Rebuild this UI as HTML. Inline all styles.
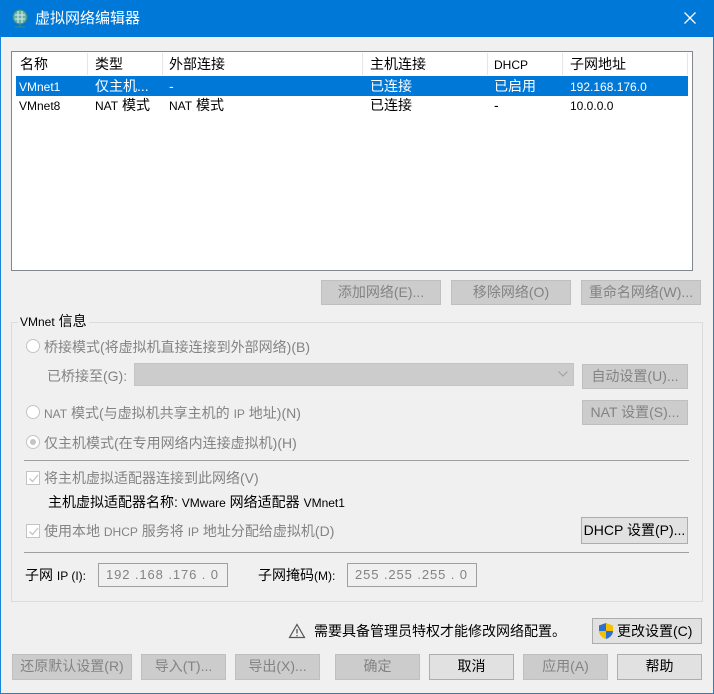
<!DOCTYPE html>
<html><head><meta charset="utf-8"><style>
*{box-sizing:border-box;margin:0;padding:0}
body{width:714px;height:694px;background:#f0f0f0;font-family:"Liberation Sans","Noto Sans CJK SC",sans-serif;font-size:14px;color:#000;position:relative;overflow:hidden}
.a{position:absolute;white-space:nowrap}
.t{line-height:18px}
.btn{position:absolute;background:#e1e1e1;border:1px solid #adadad;text-align:center;line-height:22px;font-size:14px}
.dis{background:#cccccc;border-color:#bfbfbf;color:#838383}
.g{color:#838383}
.sm{font-size:12px}
.radio{position:absolute;width:14px;height:14px;border:1px solid #c4c4c4;border-radius:50%;background:#fff}
.chk{position:absolute;width:14px;height:14px;border:1px solid #c4c4c4;background:#fff}
</style></head><body>
<div class="a" style="left:0;top:0;width:714px;height:694px;border:1px solid #1883d7;border-top:none"></div>
<div class="a" style="left:0;top:0;width:714px;height:37px;background:#0078d7"></div>
<svg class="a" style="left:11px;top:9px" width="18" height="20" viewBox="0 0 18 20"><circle cx="9" cy="8" r="7" fill="#6ab2a6" stroke="#3d8d84"/><path d="M4 6h10M4 10h10M7 2v12M11 2v12" stroke="#d8efe9" stroke-width="1"/><path d="M9 15v3M4 18h10" stroke="#3d8d84"/></svg>
<div class="a t" style="left:35px;top:10px;color:#fff;font-size:15px">虚拟网络编辑器</div>
<svg class="a" style="left:684px;top:12px" width="12" height="12"><path d="M0.5 0.5L11.5 11.5M11.5 0.5L0.5 11.5" stroke="#fff" stroke-width="1.3"/></svg>

<div class="a" style="left:11px;top:51px;width:682px;height:220px;background:#fff;border:1px solid #828790"></div>
<div class="a" style="left:87px;top:53px;width:1px;height:22px;background:#e5e5e5"></div>
<div class="a" style="left:162px;top:53px;width:1px;height:22px;background:#e5e5e5"></div>
<div class="a" style="left:362px;top:53px;width:1px;height:22px;background:#e5e5e5"></div>
<div class="a" style="left:487px;top:53px;width:1px;height:22px;background:#e5e5e5"></div>
<div class="a" style="left:562px;top:53px;width:1px;height:22px;background:#e5e5e5"></div>
<div class="a" style="left:687px;top:53px;width:1px;height:22px;background:#e5e5e5"></div>
<div class="a t" style="left:20px;top:55px">名称</div>
<div class="a t" style="left:95px;top:55px">类型</div>
<div class="a t" style="left:169px;top:55px">外部连接</div>
<div class="a t" style="left:370px;top:55px">主机连接</div>
<div class="a t sm" style="left:494px;top:56px">DHCP</div>
<div class="a t" style="left:570px;top:55px">子网地址</div>
<div class="a" style="left:16px;top:76px;width:672px;height:20px;background:#0078d7"></div>
<div class="a t sm" style="left:19px;top:78px;color:#fff">VMnet1</div>
<div class="a t" style="left:95px;top:77px;color:#fff">仅主机...</div>
<div class="a t" style="left:169px;top:77px;color:#fff">-</div>
<div class="a t" style="left:370px;top:77px;color:#fff">已连接</div>
<div class="a t" style="left:494px;top:77px;color:#fff">已启用</div>
<div class="a t sm" style="left:570px;top:78px;color:#fff">192.168.176.0</div>
<div class="a t sm" style="left:19px;top:97px">VMnet8</div>
<div class="a t" style="left:95px;top:96px"><span class="sm">NAT</span> 模式</div>
<div class="a t" style="left:169px;top:96px"><span class="sm">NAT</span> 模式</div>
<div class="a t" style="left:370px;top:96px">已连接</div>
<div class="a t" style="left:494px;top:96px">-</div>
<div class="a t sm" style="left:570px;top:97px">10.0.0.0</div>

<div class="btn dis" style="left:321px;top:280px;width:120px;height:25px">添加网络(E)...</div>
<div class="btn dis" style="left:451px;top:280px;width:120px;height:25px">移除网络(O)</div>
<div class="btn dis" style="left:581px;top:280px;width:120px;height:25px">重命名网络(W)...</div>

<div class="a" style="left:11px;top:322px;width:692px;height:280px;border:1px solid #dcdcdc"></div>
<div class="a t" style="left:18px;top:312px;background:#f0f0f0;padding:0 2px"><span class="sm">VMnet</span> 信息</div>

<div class="radio" style="left:26px;top:339px"></div>
<div class="a t g" style="left:44px;top:338px">桥接模式(将虚拟机直接连接到外部网络)(B)</div>
<div class="a t g" style="left:47px;top:367px">已桥接至(G):</div>
<div class="a" style="left:134px;top:363px;width:440px;height:23px;background:#cccccc;border:1px solid #c4c4c4"></div>
<svg class="a" style="left:558px;top:371px" width="10" height="6"><path d="M0.5 0.5L5 5L9.5 0.5" stroke="#a0a0a0" fill="none"/></svg>
<div class="btn dis" style="left:582px;top:364px;width:106px;height:25px">自动设置(U)...</div>

<div class="radio" style="left:26px;top:405px"></div>
<div class="a t g" style="left:44px;top:404px"><span class="sm">NAT</span> 模式(与虚拟机共享主机的 <span class="sm">IP</span> 地址)(N)</div>
<div class="btn dis" style="left:582px;top:400px;width:106px;height:25px">NAT 设置(S)...</div>

<div class="radio" style="left:26px;top:435px"><div style="position:absolute;left:3px;top:3px;width:6px;height:6px;border-radius:50%;background:#c4c4c4"></div></div>
<div class="a t g" style="left:44px;top:434px">仅主机模式(在专用网络内连接虚拟机)(H)</div>

<div class="a" style="left:24px;top:460px;width:665px;height:1px;background:#a0a0a0"></div>

<div class="chk" style="left:26px;top:471px"><svg style="position:absolute;left:1px;top:1px" width="11" height="11"><path d="M1.5 5.5L4.5 8.5L10 2" stroke="#c4c4c4" stroke-width="1.3" fill="none"/></svg></div>
<div class="a t g" style="left:44px;top:469px">将主机虚拟适配器连接到此网络(V)</div>
<div class="a t" style="left:48px;top:493px">主机虚拟适配器名称: <span class="sm">VMware</span> 网络适配器 <span class="sm">VMnet1</span></div>

<div class="chk" style="left:26px;top:524px"><svg style="position:absolute;left:1px;top:1px" width="11" height="11"><path d="M1.5 5.5L4.5 8.5L10 2" stroke="#c4c4c4" stroke-width="1.3" fill="none"/></svg></div>
<div class="a t g" style="left:44px;top:522px">使用本地 <span class="sm">DHCP</span> 服务将 <span class="sm">IP</span> 地址分配给虚拟机(D)</div>
<div class="btn" style="left:581px;top:517px;width:107px;height:27px;line-height:24px">DHCP 设置(P)...</div>

<div class="a" style="left:24px;top:552px;width:665px;height:1px;background:#a0a0a0"></div>

<div class="a t" style="left:25px;top:566px">子网 <span class="sm">IP (I):</span></div>
<div class="a" style="left:98px;top:563px;width:130px;height:24px;border:1px solid #a0a0a0;background:#f0f0f0"></div>
<div class="a t g" style="left:106px;top:566px;font-size:13px;letter-spacing:0.9px">192 .168 .176 .  0</div>
<div class="a t" style="left:258px;top:566px">子网掩码<span class="sm">(M):</span></div>
<div class="a" style="left:347px;top:563px;width:130px;height:24px;border:1px solid #a0a0a0;background:#f0f0f0"></div>
<div class="a t g" style="left:355px;top:566px;font-size:13px;letter-spacing:0.9px">255 .255 .255 .  0</div>

<svg class="a" style="left:288px;top:623px" width="18" height="16"><path d="M9 1.5L16.5 14.5H1.5Z" stroke="#555" stroke-width="1.2" fill="none"/><path d="M9 6v4.5M9 12v1.3" stroke="#555" stroke-width="1.3"/></svg>
<div class="a t" style="left:314px;top:622px">需要具备管理员特权才能修改网络配置。</div>
<div class="btn" style="left:592px;top:618px;width:110px;height:26px;line-height:24px;text-align:left;padding-left:24px">更改设置(C)</div>
<svg class="a" style="left:598px;top:622px" width="16" height="18" viewBox="0 0 16 18"><path d="M8 1L15 3.5V9C15 13 11.5 16 8 17C4.5 16 1 13 1 9V3.5Z" fill="#f4c000"/><path d="M8 1V9H1V3.5ZM8 9H15C15 13 11.5 16 8 17Z" fill="#2a6fd1"/></svg>

<div class="btn dis" style="left:12px;top:654px;width:120px;height:26px">还原默认设置(R)</div>
<div class="btn dis" style="left:141px;top:654px;width:85px;height:26px">导入(T)...</div>
<div class="btn dis" style="left:235px;top:654px;width:85px;height:26px">导出(X)...</div>
<div class="btn dis" style="left:335px;top:654px;width:85px;height:26px">确定</div>
<div class="btn" style="left:429px;top:654px;width:85px;height:26px">取消</div>
<div class="btn dis" style="left:523px;top:654px;width:85px;height:26px">应用(A)</div>
<div class="btn" style="left:617px;top:654px;width:85px;height:26px">帮助</div>
</body></html>
